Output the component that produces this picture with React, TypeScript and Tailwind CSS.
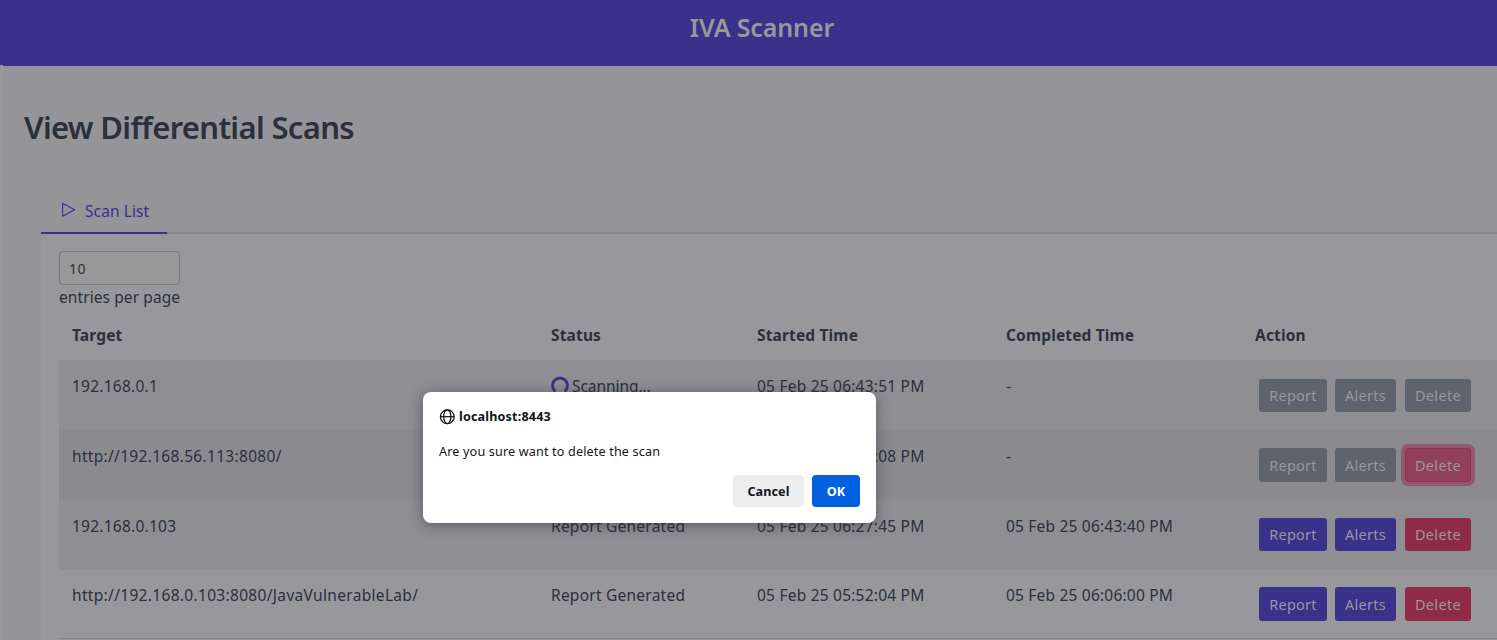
import React from "react";

type Tone = "muted" | "active";
interface Scan {
  target: string;
  status: string;
  started: string;
  completed: string;
  tone: Tone;
  row: string;
  spacing: string;
  focused?: boolean;
}

const scans: Scan[] = [
  { target: "192.168.0.1", status: "Scanning...", started: "05 Feb 25 06:43:51 PM", completed: "-", tone: "muted", row: "h-[70px] bg-[#8f8e93]", spacing: "tracking-[0.24px]" },
  { target: "http://192.168.56.113:8080/", status: "", started: "05 Feb 25 06:27:08 PM", completed: "-", tone: "muted", row: "h-[70px] bg-[#8b8a8f]", spacing: "tracking-[0.31px]", focused: true },
  { target: "192.168.0.103", status: "Report Generated", started: "05 Feb 25 06:27:45 PM", completed: "05 Feb 25 06:43:40 PM", tone: "active", row: "h-[70px] bg-[#8f8e93]", spacing: "tracking-[0.24px]" },
  { target: "http://192.168.0.103:8080/JavaVulnerableLab/", status: "Report Generated", started: "05 Feb 25 05:52:04 PM", completed: "05 Feb 25 06:06:00 PM", tone: "active", row: "h-[69px] border-b border-[#858489]", spacing: "tracking-[0.32px]" },
];

const grid = "grid grid-cols-[479px_206px_249px_249px_1fr] pl-[13px]";

function Actions({ scan, index }: { scan: Scan; index: number }) {
  const tone = scan.tone === "muted" ? "bg-[#5f636e]" : "bg-[#39318a]";
  const danger = scan.focused
    ? "bg-[#91405c] border border-[#8f3055] shadow-[0_0_0_4px_#8f5a6e]"
    : scan.tone === "muted"
      ? "bg-[#5f636e]"
      : "bg-[#8f2a49]";
  const top = index === 0 ? "mt-[19px] h-[33px]" : index === 1 ? "mt-[18px] h-[34px]" : index === 2 ? "mt-[18px] h-[33px]" : "mt-[17px] h-[34px]";
  const base = `flex items-center justify-center rounded-[3px] text-[14.5px] leading-none text-[#98979b] ${top}`;
  return (
    <div className="flex pl-1">
      <button className={`${base} ${tone} mr-2 w-[68px] tracking-[0.25px]`}>Report</button>
      <button className={`${base} ${tone} mr-[9px] w-[61px] tracking-[0.3px]`}>Alerts</button>
      <button className={`${base} ${danger} w-[66px] tracking-[0.35px]`}>Delete</button>
    </div>
  );
}

function Row({ scan, index }: { scan: Scan; index: number }) {
  const pad = index === 3 ? "pt-[13px]" : "pt-[14px]";
  return (
    <div className={`${grid} ${scan.row} text-[15.5px] leading-6`}>
      <div className={`${pad} ${scan.spacing}`}>{scan.target}</div>
      <div className={`${pad} flex items-start`}>
        {scan.status === "Scanning..." ? (
          <>
            <svg className="mr-[3px] mt-[2px] h-[18px] w-[18px]" viewBox="0 0 18 18" fill="none">
              <path d="M3.6 14.4A7.4 7.4 0 1 1 14.4 14.4" stroke="#39318a" strokeWidth="2.9" strokeLinecap="round" />
            </svg>
            <span className="tracking-[-0.05px]">{scan.status}</span>
          </>
        ) : (
          <span className="tracking-[0.24px]">{scan.status}</span>
        )}
      </div>
      <div className={`${pad} tracking-[0.22px]`}>{scan.started}</div>
      <div className={`${pad} tracking-[0.2px]`}>{scan.completed}</div>
      <Actions scan={scan} index={index} />
    </div>
  );
}

function ConfirmDialog() {
  return (
    <div role="dialog" className="absolute left-[423px] top-[392px] flex h-[131px] w-[453px] flex-col rounded-lg bg-white px-4 pb-4 pt-[15px] text-[#15141a] shadow-[0_2px_14px_rgba(40,40,50,0.5)]">
      <div className="flex h-[19px] items-center">
        <svg className="mr-1 h-4 w-4" viewBox="0 0 16 16" fill="none" stroke="#15141a" strokeWidth="1.25">
          <circle cx="8.3" cy="7.7" r="6.9" />
          <ellipse cx="8.3" cy="7.7" rx="3.6" ry="6.9" />
          <path d="M1.4 7.7h13.8" />
        </svg>
        <span className="text-[12.6px] font-bold leading-[19px] tracking-[0.16px]">localhost:8443</span>
      </div>
      <p className="mt-4 h-[19px] text-[12.6px] leading-[19px] tracking-[0.16px]">Are you sure want to delete the scan</p>
      <div className="mt-auto flex justify-end gap-2 text-[12.6px] font-bold">
        <button className="h-8 w-[71px] rounded bg-[#ededee] pt-[2px] tracking-[0.1px]">Cancel</button>
        <button className="h-8 w-12 rounded bg-[#0060df] pt-[2px] text-white">OK</button>
      </div>
    </div>
  );
}

export default function App() {
  return (
    <div className="relative flex h-[640px] w-[1497px] flex-col overflow-hidden bg-[#959498] font-['Noto_Sans','Liberation_Sans',sans-serif] text-[#2b303c]">
      <header className="flex h-[66px] shrink-0 items-start justify-center bg-[#39318a] pl-[27px] pt-[9px]">
        <span className="text-[25px] font-semibold leading-9 tracking-[-0.12px] text-[#98979b]">IVA Scanner</span>
      </header>
      <div className="-mt-px flex min-h-0 flex-1">
        <aside className="w-[3px] shrink-0 bg-[#999999]" />
        <main className="mt-px flex min-w-0 flex-1 flex-col">
          <h1 className="ml-[21px] mt-[37px] h-[49px] shrink-0 text-[31px] font-semibold leading-[48px] tracking-[-0.66px]">View Differential Scans</h1>
          <section className="ml-[38px] mt-[38px] shrink-0">
            <div className="flex h-11 border-b-2 border-[#858489]">
              <button className="-mb-[2px] flex w-[126px] items-start border-b-2 border-[#39318a] pl-[20px] pt-[9px] text-[15.5px] leading-6 tracking-[0.1px] text-[#39318a]">
                <svg className="mr-2 mt-[3px] h-4 w-4" viewBox="0 0 16 16" fill="none" stroke="currentColor" strokeWidth="1.1">
                  <path d="M1.6 1.2V14.2L13.6 7.7Z" strokeLinejoin="round" />
                </svg>
                <span>Scan List</span>
              </button>
            </div>
            <div className="bg-[#98979b] pl-[18px] pt-[17px]">
              <div className="flex h-[34px] w-[121px] items-center rounded border border-[#7b7a82] bg-[#999999] pl-[9px] pt-px text-[14px] tracking-[0.4px]">10</div>
              <div className="h-[25px] text-[15.5px] leading-6 tracking-[0.09px]">entries per page</div>
              <div className={`${grid} h-[50px] pt-[13px] text-[15.5px] font-bold leading-6 tracking-[0.15px]`}>
                <span>Target</span>
                <span>Status</span>
                <span>Started Time</span>
                <span>Completed Time</span>
                <span>Action</span>
              </div>
              {scans.map((scan, i) => (
                <Row key={scan.target} scan={scan} index={i} />
              ))}
              <div className="h-4 bg-[#98979b]" />
            </div>
          </section>
        </main>
      </div>
      <ConfirmDialog />
    </div>
  );
}
